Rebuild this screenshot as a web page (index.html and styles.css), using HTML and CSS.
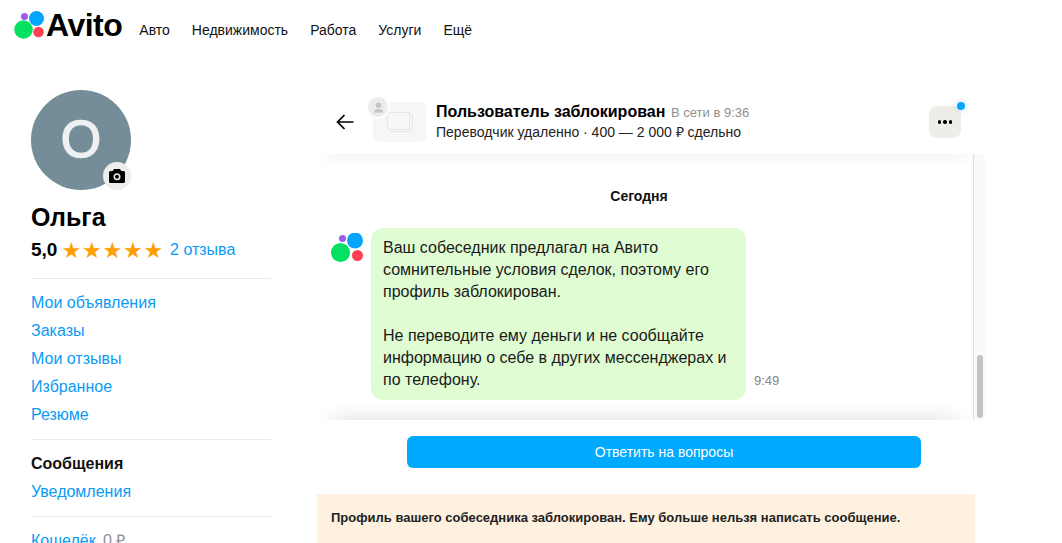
FILE: index.html
```html
<!DOCTYPE html>
<html lang="ru">
<head>
  <meta charset="UTF-8" />
  <title>Авито — Сообщения</title>
  <link rel="stylesheet" href="styles.css">
</head>
<body>
  <header class="topbar">
    <a class="logo" href="#">
      <svg class="logo-mark" viewBox="0 0 32 28" width="32" height="28">
        <circle cx="10.500" cy="5.500" r="3.500" fill="#965eeb"/>
        <circle cx="22.500" cy="7.500" r="7.500" fill="#04a5fd"/>
        <circle cx="9.500" cy="18.500" r="9.300" fill="#04e061"/>
        <circle cx="24.500" cy="21" r="5.300" fill="#ff4053"/>
      </svg>
      <span class="logo-text">Avito</span>
    </a>
    <nav class="topnav">
      <a href="#">Авто</a>
      <a href="#">Недвижимость</a>
      <a href="#">Работа</a>
      <a href="#">Услуги</a>
      <a href="#">Ещё</a>
    </nav>
  </header>

  <div class="page">
    <!-- Sidebar -->
    <aside class="sidebar">
      <div class="avatar">
        <span class="avatar-letter">О</span>
        <span class="avatar-camera">
          <svg viewBox="0 0 16 14" width="16" height="14">
            <path fill="#000" fill-rule="evenodd" d="M5 0h6l1.300 2H14.500A1.500 1.500 0 0 1 16 3.500v9a1.500 1.500 0 0 1-1.500 1.500h-13A1.500 1.500 0 0 1 0 12.500v-9A1.500 1.500 0 0 1 1.500 2H3.700zM8 4.200a3.500 3.500 0 1 0 0 7 3.500 3.500 0 0 0 0-7zM8 5.700a2 2 0 1 1 0 4 2 2 0 0 1 0-4z"/>
          </svg>
        </span>
      </div>
      <h2 class="user-name">Ольга</h2>
      <div class="rating">
        <b>5,0</b>
        <span class="stars">★★★★★</span>
        <a href="#">2 отзыва</a>
      </div>
      <ul class="side-list">
        <li><a href="#">Мои объявления</a></li>
        <li><a href="#">Заказы</a></li>
        <li><a href="#">Мои отзывы</a></li>
        <li><a href="#">Избранное</a></li>
        <li><a href="#">Резюме</a></li>
      </ul>
      <ul class="side-list">
        <li class="active">Сообщения</li>
        <li><a href="#">Уведомления</a></li>
      </ul>
      <ul class="side-list">
        <li><a href="#">Кошелёк</a> <span class="balance">0 ₽</span></li>
      </ul>
    </aside>

    <!-- Chat -->
    <main class="chat">
      <div class="chat-head">
        <svg class="back" viewBox="0 0 18 16" width="18" height="16">
          <path d="M17.500 8H1.500M8.500 1L1.500 8l7 7" fill="none" stroke="#000" stroke-width="1.700"/>
        </svg>
        <div class="thumb">
          <svg viewBox="0 0 26 20" width="26" height="20">
            <path d="M22.500 2.500h3v17h-21v-2" fill="none" stroke="#e6e6e6" stroke-width="1"/>
            <rect x="0.500" y="0.500" width="22" height="17" fill="#f7f7f7" stroke="#e6e6e6"/>
          </svg>
          <span class="thumb-user">
            <svg viewBox="0 0 12 12" width="11" height="11">
              <circle cx="6" cy="3.500" r="3" fill="#c4c4c4"/>
              <path d="M1 11.500c0-3 2-4 5-4s5 1 5 4z" fill="#c4c4c4"/>
            </svg>
          </span>
        </div>
        <div class="head-text">
          <div class="head-title"><b>Пользователь заблокирован</b> <span>В сети в 9:36</span></div>
          <div class="head-sub">Переводчик удаленно · 400 — 2 000 ₽ сдельно</div>
        </div>
        <button class="more" type="button"><span class="dots"><i></i><i></i><i></i></span></button>
      </div>

      <div class="chat-body">
        <div class="messages">
          <div class="day">Сегодня</div>
          <div class="message">
            <svg class="msg-logo" viewBox="0 0 32 32" width="32" height="32">
              <circle cx="11.500" cy="5.500" r="3.500" fill="#965eeb"/>
              <circle cx="24" cy="7.500" r="8" fill="#04a5fd"/>
              <circle cx="9.500" cy="19.500" r="9.500" fill="#04e061"/>
              <circle cx="26.500" cy="22.500" r="5.500" fill="#ff4053"/>
            </svg>
            <div class="bubble">
              <p>Ваш собеседник предлагал на Авито сомнительные условия сделок, поэтому его профиль заблокирован.</p>
              <p>Не переводите ему деньги и не сообщайте информацию о себе в других мессенджерах и по телефону.</p>
            </div>
            <span class="time">9:49</span>
          </div>
        </div>
        <div class="scrollbar"><span class="scroll-thumb"></span></div>
      </div>

      <div class="reply">
        <button class="reply-btn" type="button">Ответить на вопросы</button>
      </div>
      <div class="notice">Профиль вашего собеседника заблокирован. Ему больше нельзя написать сообщение.</div>
    </main>
  </div>
</body>
</html>
```

FILE: styles.css
```css
* {
  box-sizing: border-box;
}

html, body {
  height: 543px;
  overflow: hidden;
}

body {
  margin: 0;
  background: #fff;
  color: #000;
  font-family: "Liberation Sans", Arial, sans-serif;
  font-size: 16px;
}

a {
  color: #0a9bf5;
  text-decoration: none;
}

/* Top bar */
.topbar {
  display: flex;
  align-items: flex-start;
  height: 90px;
  padding: 10px 0 0 14px;
}

.logo {
  display: flex;
  align-items: flex-start;
  color: #000;
}

.logo-mark {
  margin-top: 1px;
}

.logo-text {
  font-size: 32px;
  font-weight: bold;
  line-height: 30px;
  letter-spacing: -0.5px;
}

.topnav {
  display: flex;
  gap: 22px;
  margin: 10px 0 0 17px;
}

.topnav a {
  color: #111;
  font-size: 14px;
  line-height: 20px;
}

.page {
  display: flex;
}

/* Sidebar */
.sidebar {
  width: 240px;
  margin: 0 46px 0 31px;
  flex-shrink: 0;
}

.avatar {
  position: relative;
  display: flex;
  align-items: center;
  justify-content: center;
  width: 100px;
  height: 100px;
  border-radius: 50%;
  background: #748d99;
}

.avatar-letter {
  margin-bottom: 3px;
  color: #eef0f1;
  font-size: 52px;
  line-height: 1;
  -webkit-text-stroke: 1.5px #eef0f1;
}

.avatar-camera {
  position: absolute;
  right: 0;
  bottom: 0;
  display: flex;
  align-items: center;
  justify-content: center;
  width: 28px;
  height: 28px;
  border-radius: 50%;
  background: #ededed;
}

.user-name {
  margin: 13px 0 0;
  font-size: 25px;
  line-height: 28px;
}

.rating {
  display: flex;
  align-items: center;
  height: 24px;
  margin-top: 7px;
  font-size: 19px;
}

.stars {
  margin: 0 6px 0 4px;
  color: #ff9e00;
  font-family: "DejaVu Sans", sans-serif;
  font-size: 22px;
  letter-spacing: 0.8px;
}

.rating a {
  font-size: 16px;
}

.side-list {
  margin: 0;
  padding: 10px 0;
  list-style: none;
  border-top: 1px solid #eaeaea;
  line-height: 28px;
}

.rating + .side-list {
  margin-top: 16px;
}

.active {
  font-weight: bold;
  color: #111;
}

.balance {
  color: #8f8f8f;
  margin-left: 3px;
}

/* Chat */
.chat {
  width: 668px;
}

.chat-head {
  position: relative;
  z-index: 1;
  display: flex;
  align-items: center;
  width: 658px;
  height: 64px;
  padding-left: 19px;
  background: #fff;
  border-radius: 0 0 12px 12px;
  box-shadow: 0 12px 14px -8px rgba(0, 0, 0, 0.05);
}

.back {
  flex-shrink: 0;
}

.thumb {
  position: relative;
  display: flex;
  align-items: center;
  justify-content: center;
  width: 53px;
  height: 40px;
  margin-left: 19px;
  background: #f6f6f6;
  border-radius: 6px;
}

.thumb-user {
  position: absolute;
  top: -7px;
  left: -7px;
  display: flex;
  align-items: center;
  justify-content: center;
  width: 24px;
  height: 24px;
  background: #ececec;
  border: 2px solid #fff;
  border-radius: 50%;
}

.head-text {
  flex: 1;
  margin-left: 10px;
}

.head-title {
  font-size: 13px;
  line-height: 20px;
  color: #8f8f8f;
}

.head-title b {
  margin-right: 2px;
  color: #000;
  font-size: 16px;
}

.head-sub {
  font-size: 14px;
  line-height: 19px;
  color: #222;
}

.more {
  position: relative;
  display: flex;
  align-items: center;
  justify-content: center;
  width: 32px;
  height: 32px;
  margin-right: 14px;
  padding: 0;
  background: #efede8;
  border: none;
  border-radius: 8px;
}

.more::after {
  content: "";
  position: absolute;
  top: -4px;
  right: -4px;
  width: 8px;
  height: 8px;
  background: #04a5fd;
  border-radius: 50%;
  box-shadow: 0 0 0 4px rgba(4, 165, 253, 0.05);
}

.dots {
  display: flex;
  gap: 2px;
}

.dots i {
  width: 3.500px;
  height: 3.500px;
  background: #000;
  border-radius: 50%;
}

.chat-body {
  position: relative;
  display: flex;
  width: 668px;
  height: 266px;
}

.chat-body::after {
  content: "";
  position: absolute;
  left: 4px;
  bottom: 0;
  width: 652px;
  height: 16px;
  background: linear-gradient(rgba(0, 0, 0, 0), rgba(0, 0, 0, 0.07));
  -webkit-mask-image: linear-gradient(90deg, transparent, #000 30px, #000 calc(100% - 40px), transparent);
  mask-image: linear-gradient(90deg, transparent, #000 30px, #000 calc(100% - 40px), transparent);
}

.messages {
  width: 656px;
}

.day {
  margin-top: 33px;
  padding-right: 12px;
  text-align: center;
  font-size: 14px;
  font-weight: bold;
  line-height: 18px;
  color: #111;
}

.message {
  display: flex;
  align-items: flex-start;
  margin: 23px 0 0 14px;
}

.msg-logo {
  margin-top: 5px;
  flex-shrink: 0;
}

.bubble {
  width: 375px;
  height: 172px;
  margin-left: 8px;
  padding: 9px 12px;
  background: #e0fcd2;
  border-radius: 12px;
  font-size: 16px;
  line-height: 22px;
  color: #1a1a1a;
}

.bubble p {
  margin: 0 0 22px;
}

.time {
  align-self: flex-end;
  margin: 0 0 11px 8px;
  color: #858585;
  font-size: 13px;
  line-height: 16px;
}

.scrollbar {
  display: flex;
  flex-direction: column;
  justify-content: flex-end;
  width: 12px;
  height: 100%;
  padding: 0 2px 2px 3px;
  background: #fafafa;
  border-left: 1px solid #e0e0e0;
}

.scroll-thumb {
  height: 63px;
  background: #c4c4c4;
  border-radius: 4px;
}

.reply {
  width: 658px;
  padding: 16px 0 26px 90px;
}

.reply-btn {
  display: block;
  width: 514px;
  height: 32px;
  padding: 0;
  background: #00aaff;
  border: none;
  border-radius: 6px;
  color: #fff;
  font-family: inherit;
  font-size: 14px;
}

.notice {
  width: 658px;
  height: 49px;
  padding: 16px 14px;
  background: #fef1e0;
  font-size: 13px;
  font-weight: bold;
  line-height: 16px;
  color: #222;
}
```
